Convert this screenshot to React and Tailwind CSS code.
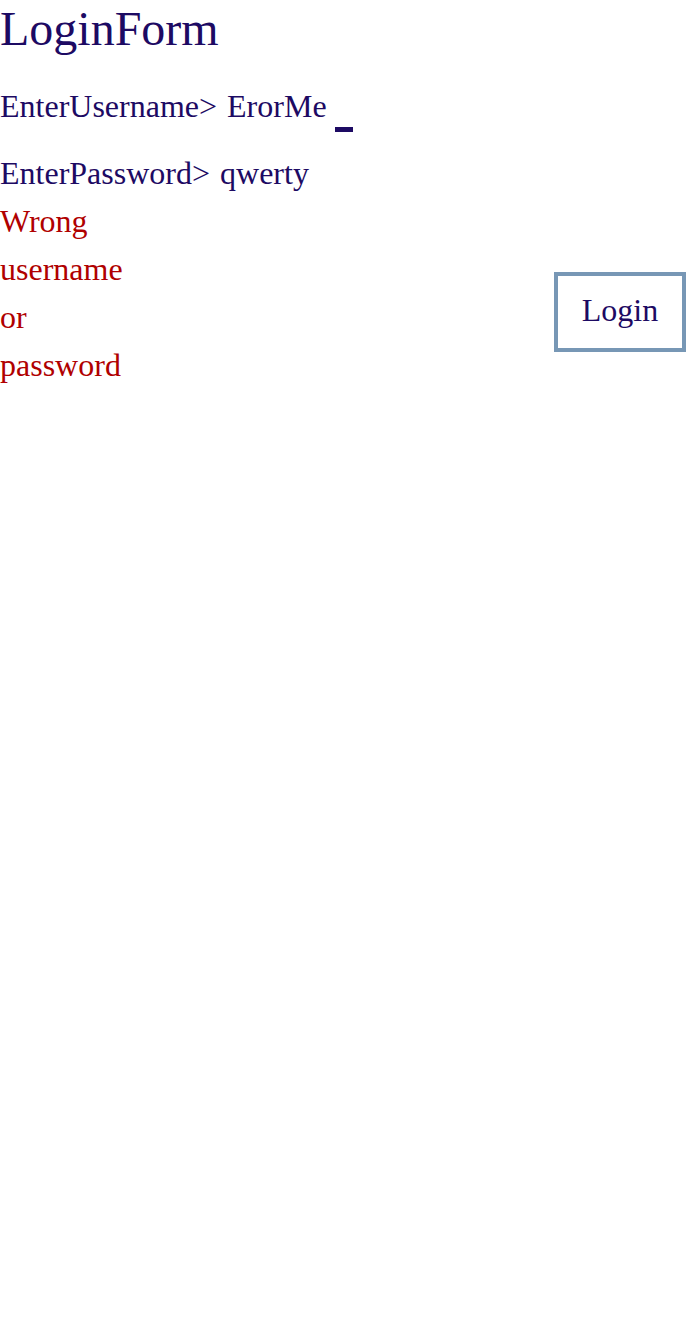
import React, { useState } from "react";

const serif = { fontFamily: '"Liberation Serif", "Times New Roman", serif' };

export default function App() {
  const [username] = useState("ErorMe");
  const [password] = useState("qwerty");
  const [error] = useState("Wrong username or password");

  return (
    <div style={serif} className="w-[686px] min-h-[1334px] bg-white text-[#1d0a63]">
      {/* Title */}
      <h1 className="text-[48px] leading-[58px] m-0">LoginForm</h1>

      {/* Username */}
      <div className="mt-[24px] flex items-end h-[50px] text-[32px] leading-[48px]">
        <span className="-translate-y-[2px]">EnterUsername&gt;</span>
        <span className="ml-[10px] -translate-y-[2px]">{username}</span>
        <span className="ml-[8px] w-[18px] h-[5px] bg-[#1d0a63]" />
      </div>

      {/* Password */}
      <div className="mt-[17px] flex text-[32px] leading-[48px]">
        <span>EnterPassword&gt;</span>
        <span className="ml-[10px]">{password}</span>
      </div>

      {/* Error + button */}
      <div className="flex items-start justify-between">
        <p className="w-[130px] text-[32px] leading-[48px] text-[#b00000]">{error}</p>
        <button
          style={serif}
          className="mt-[75px] w-[132px] h-[80px] pb-[5px] border-[4px] border-[#7797b5] bg-white text-[32px] text-[#1d0a63]"
        >
          Login
        </button>
      </div>
    </div>
  );
}
